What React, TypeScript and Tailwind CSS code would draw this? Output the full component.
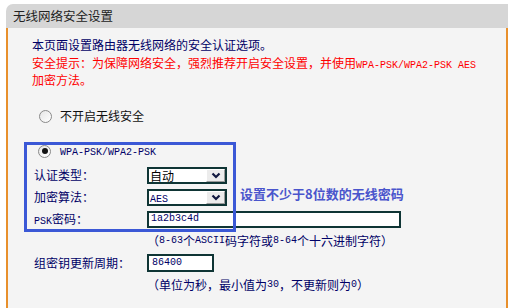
import React from 'react';

const cjk = { fontFamily: '"Noto Sans CJK SC", "Noto Sans", sans-serif' };
const mono = { fontFamily: '"Liberation Mono", "DejaVu Sans Mono", monospace' };

// Latin runs in the router page are a narrow fixed-width font
const M: React.FC<{ children: React.ReactNode; className?: string }> = ({ children, className }) => (
  <span style={mono} className={`text-[10px] leading-none ${className ?? ''}`}>{children}</span>
);

const Radio: React.FC<{ checked?: boolean }> = ({ checked }) => (
  <span className="w-[13px] h-[13px] rounded-full border border-[#8a8a8a] bg-gradient-to-br from-[#e6e6e6] to-white flex items-center justify-center shrink-0">
    {checked && <span className="w-[6px] h-[6px] rounded-full bg-[#111]" />}
  </span>
);

const Chevron = () => (
  <svg width="10" height="7" viewBox="0 0 10 7">
    <path d="M1.5 1.5 L5 5 L8.5 1.5" fill="none" stroke="#101840" strokeWidth="2.2" />
  </svg>
);

const Select: React.FC<{ value: React.ReactNode }> = ({ value }) => (
  <div className="w-[80px] h-[17px] border-2 border-[#0f3535] bg-white flex items-center">
    <div className="flex-1 pl-[1px] text-[12px] leading-[13px] text-black">{value}</div>
    <div className="w-[19px] h-[13px] bg-[#ececec] border-l border-t border-white border-r border-b border-r-[#9a9a9a] border-b-[#9a9a9a] flex items-center justify-center">
      <Chevron />
    </div>
  </div>
);

const Row: React.FC<{ label: React.ReactNode; children?: React.ReactNode }> = ({ label, children }) => (
  <div className="h-[22px] flex items-center">
    <div className="w-[113px] shrink-0">{label}</div>
    {children}
  </div>
);

export default function App() {
  return (
    <div style={cjk} className="w-[512px] h-[308px] bg-white pt-[4px] pl-[6px] pr-[4px] flex flex-col text-[12px] text-[#000066]">
      {/* title bar */}
      <div className="h-[24px] bg-[#d6d6d6] rounded-tl-[7px] pl-[7px] text-[12.5px] leading-[24px] text-[#222]">
        无线网络安全设置
      </div>

      {/* panel */}
      <div className="relative flex-1 border-l-2 border-r-2 border-[#e8902c] bg-[#f4f4f4] pt-[8px]">
        <div className="pl-[24px] whitespace-nowrap">
          <div className="h-[18px] leading-[18px]">本页面设置路由器无线网络的安全认证选项。</div>
          <div className="h-[17px] leading-[18px] text-[#ff0000]">
            安全提示：为保障网络安全，强烈推荐开启安全设置，并使用<M>WPA-PSK/WPA2-PSK AES</M>
          </div>
          <div className="h-[18px] leading-[18px] text-[#ff0000]">加密方法。</div>
        </div>

        <div className="mt-[16px] h-[22px] pl-[31px] flex items-center gap-[8px] text-[#111]">
          <Radio />
          <span>不开启无线安全</span>
        </div>

        <div className="mt-[12px] h-[24px] pl-[30px] flex items-center gap-[9px] text-[#000066]">
          <Radio checked />
          <M className="mt-[3px]">WPA-PSK/WPA2-PSK</M>
        </div>

        <div className="mt-[1px] pl-[26px]">
          <Row label="认证类型：">
            <Select value="自动" />
          </Row>
          <Row label="加密算法：">
            <Select value={<M className="text-[#000066]">AES</M>} />
            <span className="self-start ml-[13px] text-[13px] leading-[16px] font-bold text-[#4a55cc]">
              设置不少于8位数的无线密码
            </span>
          </Row>
          <Row label={<span><M>PSK</M>密码：</span>}>
            <div className="w-[254px] h-[17px] border-2 border-[#0f3535] bg-white pl-[2px] flex items-center">
              <M className="text-[#000066]">1a2b3c4d</M>
            </div>
          </Row>
          <div className="h-[22px] pl-[113px] flex items-center whitespace-nowrap">
            （<M>8-63</M>个<M>ASCII</M>码字符或<M>8-64</M>个十六进制字符）
          </div>
          <Row label="组密钥更新周期：">
            <div className="w-[67px] h-[18px] border-2 border-[#0f3535] bg-white pl-[3px] flex items-center">
              <M className="text-[#000066]">86400</M>
            </div>
          </Row>
          <div className="h-[22px] pl-[113px] flex items-center whitespace-nowrap">
            （单位为秒，最小值为<M>30</M>，不更新则为<M>0</M>）
          </div>
        </div>

        {/* annotation frame drawn over the form */}
        <div className="absolute left-[16px] top-[114px] w-[212px] h-[90px] border-[3px] border-[#3b58d6] pointer-events-none" />
      </div>
    </div>
  );
}
